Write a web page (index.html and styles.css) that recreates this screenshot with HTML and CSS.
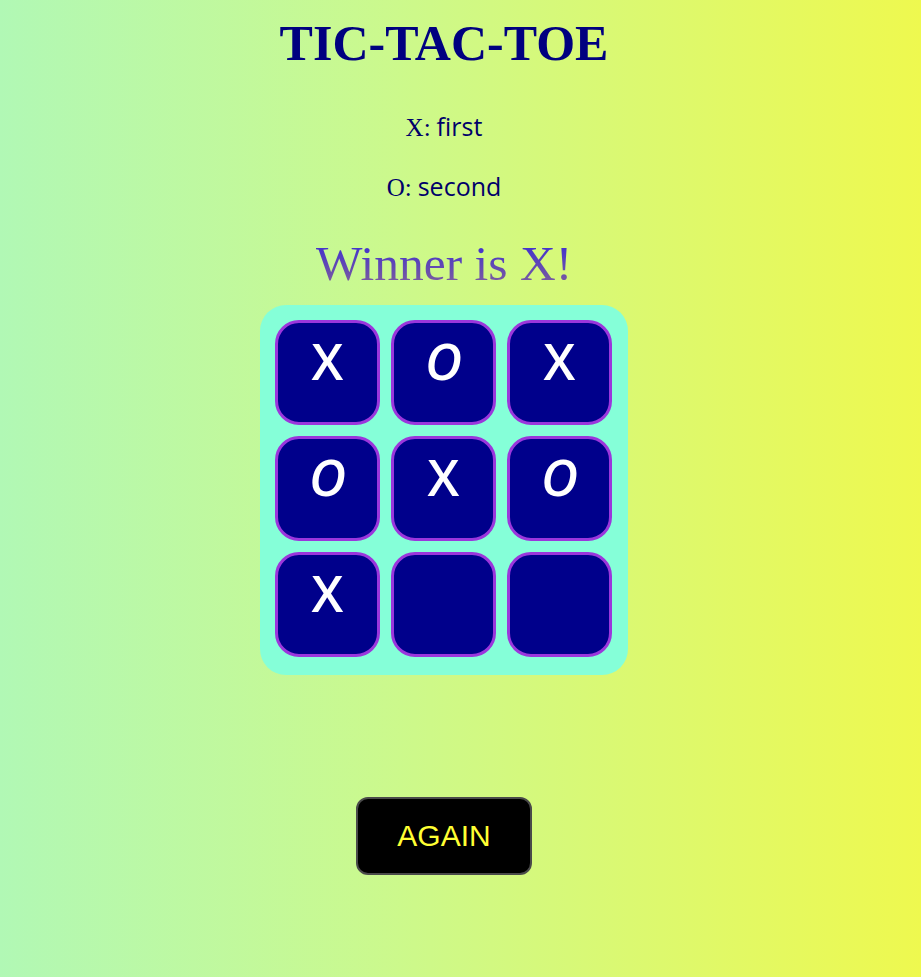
FILE: index.html
```html
<!DOCTYPE html>
<html lang="en">
<head>
<meta charset="utf-8">
<title>Tic-Tac-Toe</title>
<link rel="stylesheet" href="styles.css">
</head>
<body>
<main class="page">
  <h1 class="title">TIC-TAC-TOE</h1>
  <p class="player"><span class="mark">X:</span> <span class="role">first</span></p>
  <p class="player second"><span class="mark">O:</span> <span class="role">second</span></p>
  <h2 class="winner">Winner is X!</h2>
  <div class="board">
    <div class="cell">X</div>
    <div class="cell o">O</div>
    <div class="cell">X</div>
    <div class="cell o">O</div>
    <div class="cell">X</div>
    <div class="cell o">O</div>
    <div class="cell">X</div>
    <div class="cell"></div>
    <div class="cell"></div>
  </div>
  <button class="again" type="button">AGAIN</button>
</main>
</body>
</html>
```

FILE: styles.css
```css
html, body {
  margin: 0;
  padding: 0;
}

body {
  min-height: 100vh;
  background: linear-gradient(to right, #b1f8b5 0%, #cdf98a 45%, #eef94f 100%);
}

.page {
  width: 888px;
  display: flex;
  flex-direction: column;
  align-items: center;
  text-align: center;
}

.title {
  margin: 15px 0 0;
  font-family: "Liberation Serif", "Times New Roman", serif;
  font-weight: bold;
  font-size: 50px;
  line-height: 56px;
  color: #000080;
}

.player {
  margin: 40px 0 0;
  font-size: 24px;
  line-height: 30px;
  color: #00006a;
}

.player.second {
  margin-top: 28px;
}

.mark {
  font-family: "Liberation Serif", "Times New Roman", serif;
  font-size: 25px;
}

.role {
  font-family: "Comic Sans MS", "Open Sans", sans-serif;
  font-size: 25px;
}

.winner {
  margin: 33px 0 0;
  font-family: "Liberation Serif", "Times New Roman", serif;
  font-weight: normal;
  font-size: 49.5px;
  line-height: 56px;
  background: linear-gradient(to bottom, #4433cc 20%, #80609a 90%);
  -webkit-background-clip: text;
  background-clip: text;
  color: transparent;
}

.board {
  margin-top: 13px;
  display: grid;
  grid-template-columns: repeat(3, 105px);
  grid-auto-rows: 105px;
  gap: 11px;
  padding: 15px 16px 18px 15px;
  background: #85ffd8;
  border-radius: 26px;
}

.cell {
  box-sizing: border-box;
  border: 3px solid #9b36dc;
  border-radius: 24px;
  background: #00008b;
  color: #ffffff;
  font-family: "Comic Sans MS", "Open Sans", sans-serif;
  font-weight: 600;
  font-size: 51px;
  line-height: 70px;
  padding-top: 2px;
}

.cell.o {
  font-style: italic;
}

.again {
  margin-top: 122px;
  box-sizing: border-box;
  width: 176px;
  height: 78px;
  background: #000000;
  border: 2px solid #4a4a4a;
  border-radius: 12px;
  color: #ffff33;
  font-family: "Liberation Sans", Arial, sans-serif;
  font-size: 30px;
  padding: 0;
}
```
